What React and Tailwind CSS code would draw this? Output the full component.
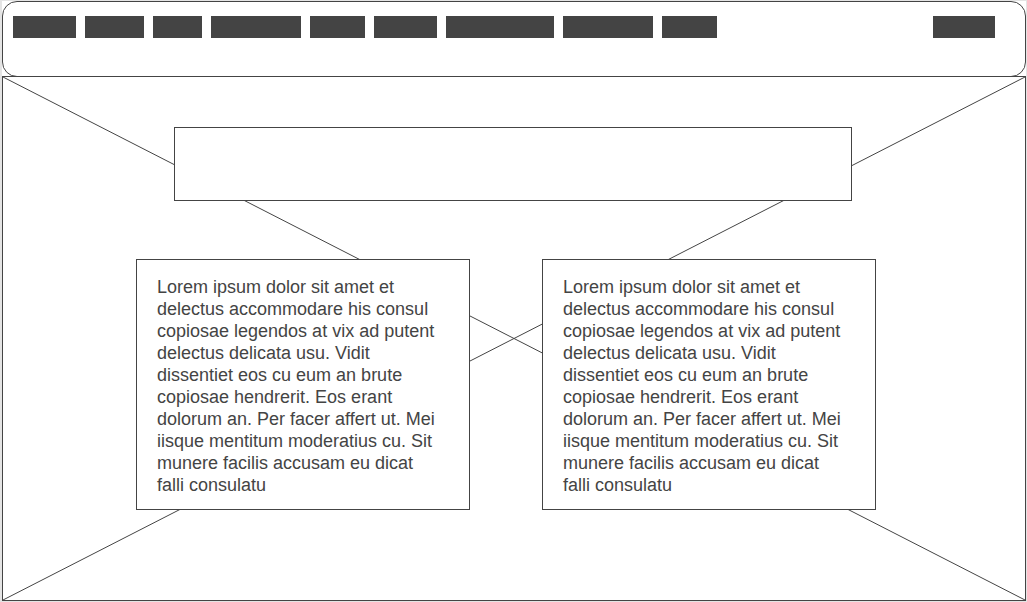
const menuItems = [
  { id: 1, width: "w-[63px]" },
  { id: 2, width: "w-[59px]" },
  { id: 3, width: "w-[49px]" },
  { id: 4, width: "w-[90px]" },
  { id: 5, width: "w-[55px]" },
  { id: 6, width: "w-[63px]" },
  { id: 7, width: "w-[108px]" },
  { id: 8, width: "w-[90px]" },
  { id: 9, width: "w-[55px]" },
];

const copy =
  "Lorem ipsum dolor sit amet et delectus accommodare his consul copiosae legendos at vix ad putent delectus delicata usu. Vidit dissentiet eos cu eum an brute copiosae hendrerit. Eos erant dolorum an. Per facer affert ut. Mei iisque mentitum moderatius cu. Sit munere facilis accusam eu dicat falli consulatu";

function MenuBar({ label, width }) {
  return (
    <a href="#" aria-label={label} className={`block h-[22px] shrink-0 bg-[#444444] ${width}`} />
  );
}

function Header() {
  return (
    <header className="flex h-[76px] items-start justify-between rounded-[15px] border border-[#444444] bg-white pt-3.5 pr-[30px] pl-2.5">
      <nav aria-label="Main">
        <ul className="flex gap-[9px]">
          {menuItems.map((item) => (
            <li key={item.id}>
              <MenuBar label={`Menu item ${item.id}`} width={item.width} />
            </li>
          ))}
        </ul>
      </nav>
      <MenuBar label="Account" width="w-[62px]" />
    </header>
  );
}

// Crossed diagonals that mark the hero's picture area.
function Diagonals() {
  return (
    <svg aria-hidden="true" className="absolute inset-0 h-full w-full" stroke="#444444" strokeWidth="1">
      <line x1="0" y1="0" x2="100%" y2="100%" />
      <line x1="100%" y1="0" x2="0" y2="100%" />
    </svg>
  );
}

function TextCard() {
  return (
    <article className="w-[334px] border border-[#444444] bg-white pt-4 pr-[30px] pb-[13px] pl-5">
      <p className="text-[18px] leading-[22px]">{copy}</p>
    </article>
  );
}

export default function App() {
  return (
    <div className="flex min-h-screen flex-col bg-[#e4e4e4] pt-px pr-px pb-px pl-0.5 font-['Liberation_Sans',Arial,sans-serif] text-[#444444]">
      <div className="flex flex-1 flex-col bg-white">
        <Header />
        <main className="relative -mt-px flex flex-1 flex-col border border-[#444444]">
          <Diagonals />
          <div className="relative flex flex-col items-center gap-[58px] pt-[50px] pr-0.5 pb-20">
            <section aria-label="Banner" className="h-[74px] w-2/3 max-w-[678px] border border-[#444444] bg-white" />
            <section className="flex flex-wrap justify-center gap-[72px] pr-3.5">
              <TextCard />
              <TextCard />
            </section>
          </div>
        </main>
      </div>
    </div>
  );
}
